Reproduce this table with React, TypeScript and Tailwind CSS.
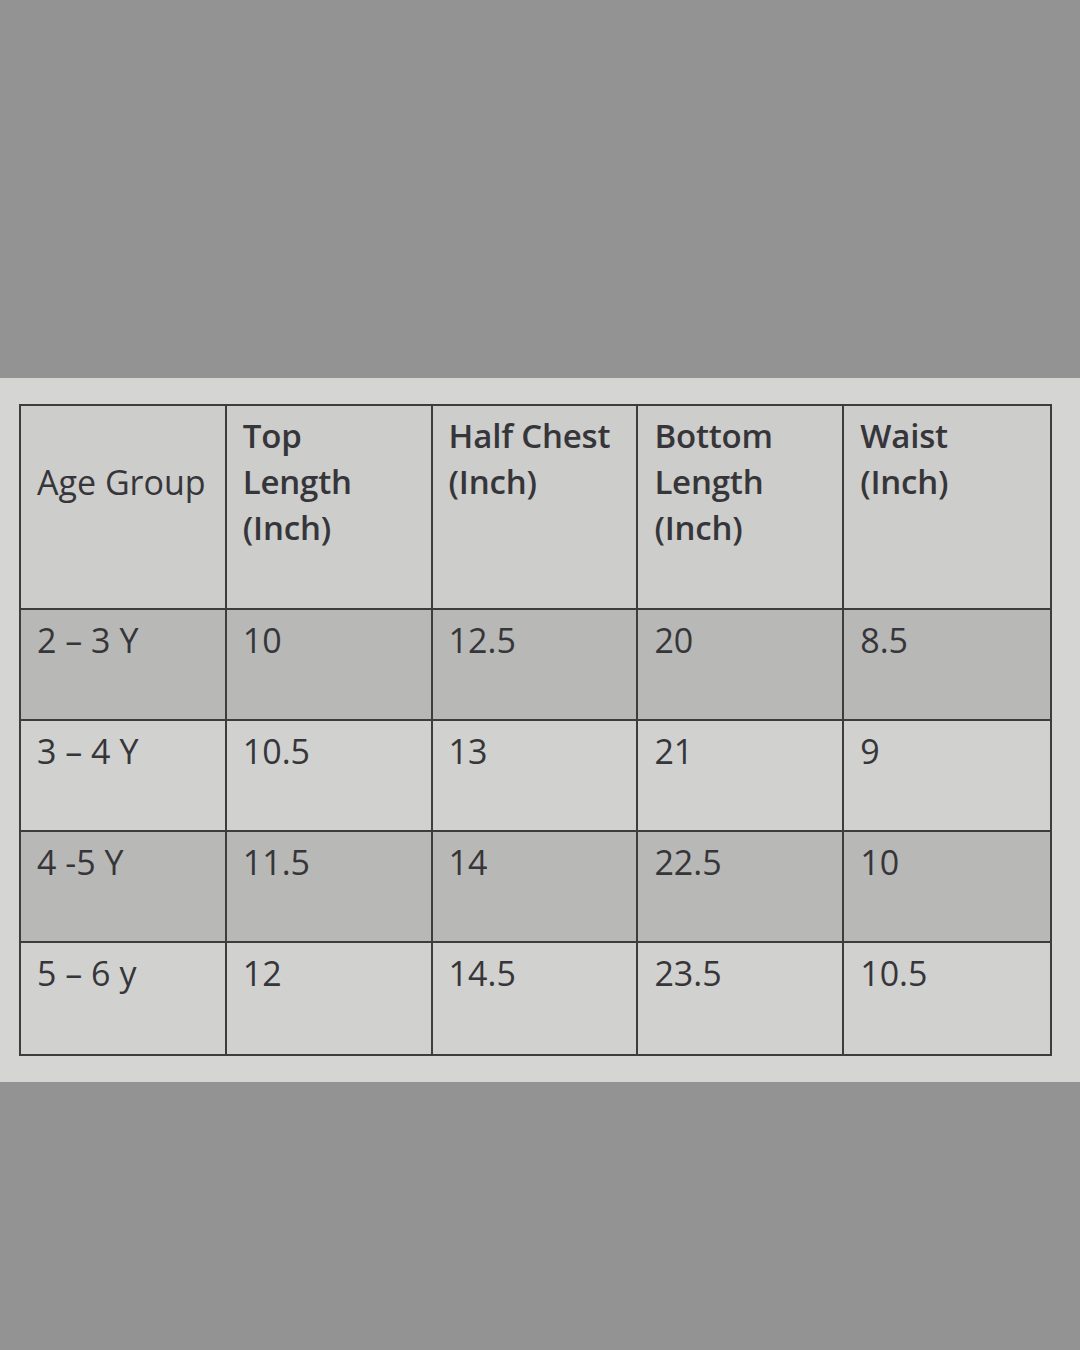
import React from "react";

const headers = [
  { lines: ["Age Group"], bold: false, offset: true },
  { lines: ["Top", "Length", "(Inch)"], bold: true, offset: false },
  { lines: ["Half Chest", "(Inch)"], bold: true, offset: false },
  { lines: ["Bottom", "Length", "(Inch)"], bold: true, offset: false },
  { lines: ["Waist", "(Inch)"], bold: true, offset: false },
];

const rows = [
  { cells: ["2 – 3 Y", "10", "12.5", "20", "8.5"], shaded: true },
  { cells: ["3 – 4 Y", "10.5", "13", "21", "9"], shaded: false },
  { cells: ["4 -5 Y", "11.5", "14", "22.5", "10"], shaded: true },
  { cells: ["5 – 6 y", "12", "14.5", "23.5", "10.5"], shaded: false },
];

const App = () => {
  return (
    <div
      className="w-[1080px] h-[1350px] bg-[#939393] flex flex-col"
      style={{ fontFamily: '"Open Sans", "Liberation Sans", sans-serif' }}
    >
      <div className="h-[378px]" />
      <div className="h-[704px] bg-[#d5d5d3] pt-[26px] pl-[19px]">
        {/* Size chart table */}
        <div className="w-[1033px] grid grid-cols-5 border-2 border-[#3d3d3f] text-[#36363a]">
          {headers.map((h, i) => (
            <div
              key={i}
              className={`h-[204px] bg-[#cdcdcb] px-[16px] leading-[46px] border-b-2 border-[#3d3d3f] ${
                i < 4 ? "border-r-2" : ""
              } ${h.offset ? "pt-[53px] text-[34px]" : "pt-[7px] text-[33px]"} ${
                h.bold ? "font-semibold tracking-[-0.2px]" : "font-normal"
              }`}
            >
              {h.lines.map((l) => (
                <div key={l}>{l}</div>
              ))}
            </div>
          ))}
          {rows.map((r, ri) =>
            r.cells.map((c, ci) => (
              <div
                key={`${ri}-${ci}`}
                className={`h-[111px] px-[16px] pt-[7px] text-[34px] leading-[46px] border-[#3d3d3f] ${
                  r.shaded ? "bg-[#b8b8b6]" : "bg-[#d1d1cf]"
                } ${ci < 4 ? "border-r-2" : ""} ${ri < 3 ? "border-b-2" : ""}`}
              >
                {c}
              </div>
            ))
          )}
        </div>
      </div>
    </div>
  );
};

export default App;
